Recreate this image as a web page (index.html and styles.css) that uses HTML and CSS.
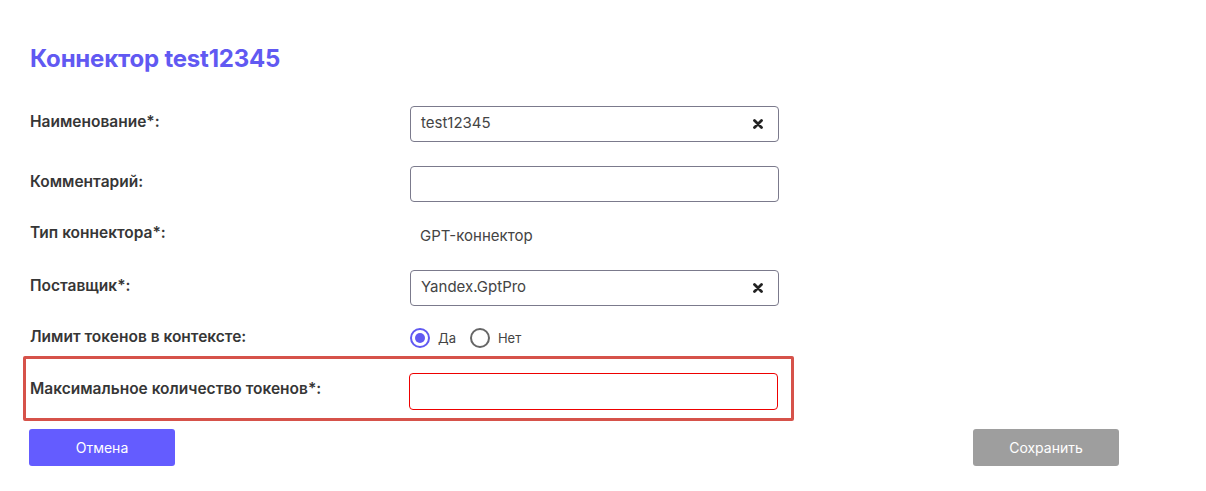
FILE: index.html
```html
<!DOCTYPE html>
<html lang="ru">
<head>
<meta charset="utf-8">
<link rel="stylesheet" href="styles.css">
</head>
<body>
<div class="page">
  <h1 class="title">Коннектор test12345</h1>

  <div class="row r1">
    <div class="label">Наименование*:</div>
    <div class="field">
      <span class="value">test12345</span>
      <svg class="clear" width="10" height="10" viewBox="0 0 10 10"><path d="M1.5 1.5 L8.5 8.5 M8.5 1.5 L1.5 8.5" stroke="#222" stroke-width="2.8" stroke-linecap="round"/></svg>
    </div>
  </div>

  <div class="row r2">
    <div class="label">Комментарий:</div>
    <div class="field"></div>
  </div>

  <div class="row r3">
    <div class="label">Тип коннектора*:</div>
    <div class="static">GPT-коннектор</div>
  </div>

  <div class="row r4">
    <div class="label">Поставщик*:</div>
    <div class="field">
      <span class="value">Yandex.GptPro</span>
      <svg class="clear" width="10" height="10" viewBox="0 0 10 10"><path d="M1.5 1.5 L8.5 8.5 M8.5 1.5 L1.5 8.5" stroke="#222" stroke-width="2.8" stroke-linecap="round"/></svg>
    </div>
  </div>

  <div class="row r5">
    <div class="label">Лимит токенов в контексте:</div>
    <div class="radios">
      <span class="radio on"></span><span class="rtext">Да</span>
      <span class="radio"></span><span class="rtext">Нет</span>
    </div>
  </div>

  <div class="highlight">
    <div class="row r6">
      <div class="label">Максимальное количество токенов*:</div>
      <div class="field error"></div>
    </div>
  </div>

  <div class="actions">
    <button class="btn primary">Отмена</button>
    <button class="btn disabled">Сохранить</button>
  </div>
</div>
</body>
</html>
```

FILE: styles.css
```css
html, body {
  margin: 0;
  padding: 0;
  background: #fff;
}
body {
  font-family: "Inter", "Noto Sans", sans-serif;
  color: #333;
}
.page {
  padding: 44px 0 0 30px;
  width: 1089px;
}
.title {
  margin: 0;
  height: 30px;
  line-height: 30px;
  font-size: 24px;
  font-weight: 700;
  color: #6159f2;
  letter-spacing: -0.2px;
}
.row {
  display: flex;
  align-items: center;
}
.label {
  width: 380px;
  flex: none;
  font-size: 15.5px;
  font-weight: 600;
  color: #363636;
  position: relative;
  top: -3px;
}
.r1 { margin-top: 32px; height: 36px; }
.r2 { margin-top: 24px; height: 36px; }
.r3 { margin-top: 15px; height: 36px; }
.r4 { margin-top: 17px; height: 36px; }
.r5 { margin-top: 22px; height: 20px; }
.r5 .label { top: -2px; }
.field {
  box-sizing: border-box;
  width: 369px;
  height: 36px;
  border: 1px solid #7b7a8c;
  border-radius: 4px;
  display: flex;
  align-items: center;
  padding: 0 15px 0 10px;
}
.value {
  flex: 1;
  font-size: 15px;
  color: #444;
  position: relative;
  top: -2px;
}
.clear { flex: none; }
.static {
  font-size: 15px;
  color: #444;
  padding-left: 10px;
}
.radios {
  display: flex;
  align-items: center;
}
.radio {
  box-sizing: border-box;
  width: 20px;
  height: 20px;
  border-radius: 50%;
  border: 2px solid #666;
  position: relative;
}
.radio.on {
  border-color: #6159f2;
}
.radio.on::after {
  content: "";
  position: absolute;
  left: 3px;
  top: 3px;
  width: 10px;
  height: 10px;
  border-radius: 50%;
  background: #6159f2;
}
.rtext {
  font-size: 13px;
  color: #444;
  margin: 0 14px 0 8px;
}
.highlight {
  box-sizing: border-box;
  margin: 8px 0 0 -7px;
  width: 771px;
  height: 65px;
  border: 3px solid #d6524a;
  border-radius: 2px;
  padding: 14px 0 0 4px;
}
.r6 { height: 37px; }
.r6 .label { width: 379px; top: -3px; }
.field.error {
  border-color: #ee0000;
  height: 37px;
}
.actions {
  margin-top: 8px;
  margin-left: -1px;
  display: flex;
  justify-content: space-between;
}
.btn {
  width: 146px;
  height: 37px;
  border: none;
  border-radius: 3px;
  font-family: "Inter", "Noto Sans", sans-serif;
  font-size: 14px;
  color: #fff;
  padding: 0;
}
.btn.primary { background: #645cff; }
.btn.disabled { background: #9e9e9e; }
```
